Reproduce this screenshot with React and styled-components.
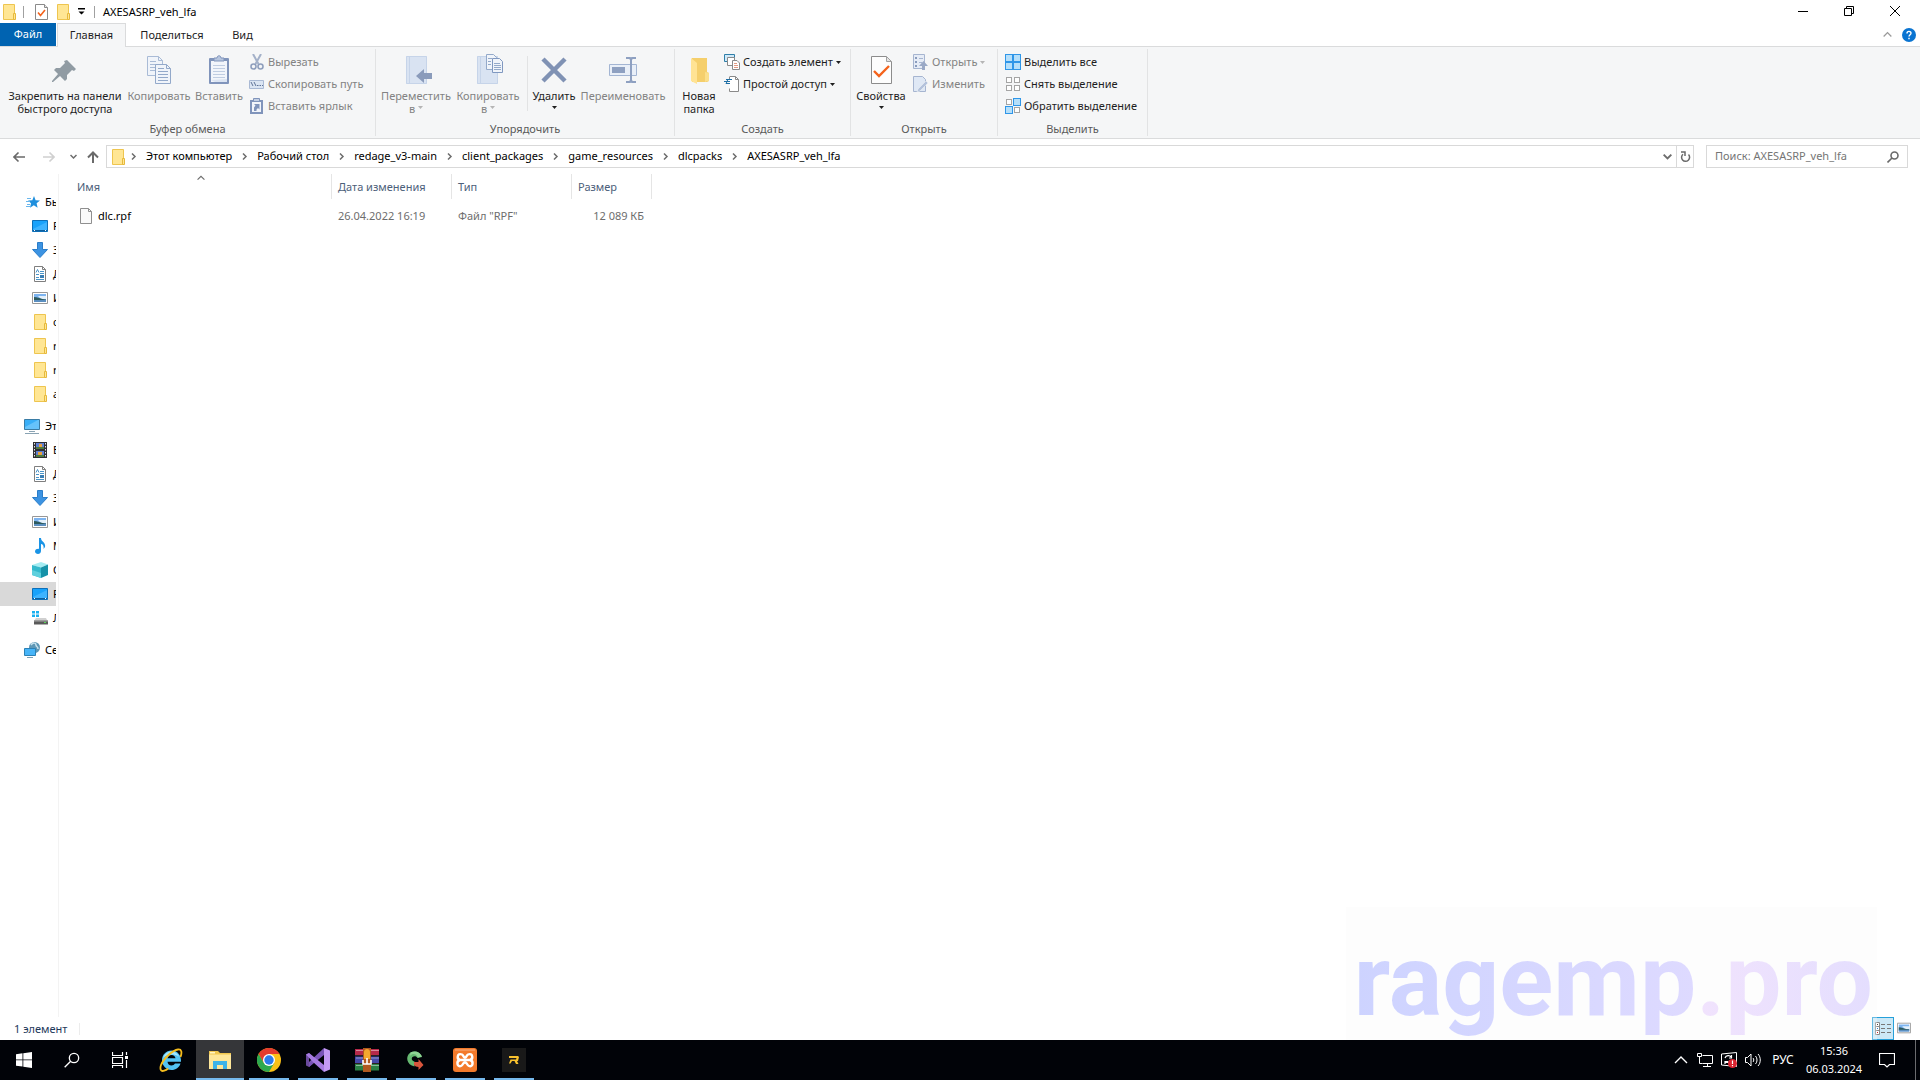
import React from 'react';
import styled, { createGlobalStyle } from 'styled-components';

const GlobalStyle = createGlobalStyle`
  *, *::before, *::after {
    box-sizing: border-box;
  }
  body {
    margin: 0;
    font-family: 'Noto Sans', 'Open Sans', sans-serif;
    font-size: 11px;
    line-height: 16px;
    color: #1e1e1e;
    background: #fff;
  }
  button, input {
    font: inherit;
    color: inherit;
    background: none;
    border: 0;
    padding: 0;
    margin: 0;
  }
  svg {
    display: block;
    flex: none;
  }
`;

const Desktop = styled.div`
  position: relative;
  display: flex;
  flex-direction: column;
  min-height: 100vh;
  overflow: hidden;
`;

/* ---------- title bar ---------- */

const TitleBar = styled.header`
  display: flex;
  align-items: stretch;
  height: 23px;
  padding: 0 2px 0 1px;
`;

const QuickTools = styled.div`
  display: flex;
  align-items: center;
  flex: 1;
`;

const QuickButton = styled.button`
  display: flex;
  justify-content: center;
  align-items: center;
  width: ${({ width }) => width}px;
  height: 23px;
`;

const Divider = styled.span`
  width: 1px;
  height: 12px;
  margin-left: ${({ space }) => space || 0}px;
  background: #a0a0a0;
`;

const WindowTitle = styled.h1`
  margin: 0 0 0 8px;
  font-size: 11px;
  font-weight: 400;
  color: #000;
`;

const CaptionButton = styled.button`
  display: flex;
  justify-content: center;
  align-items: center;
  width: 46px;
  height: 21px;
`;

/* ---------- tabs ---------- */

const TabBar = styled.nav`
  display: flex;
  height: 24px;
  border-bottom: 1px solid #dadbdc;
`;

const Tab = styled.button`
  width: ${({ width }) => width}px;
  height: 24px;
  padding-bottom: 2px;
  border: 1px solid transparent;
  border-bottom: 0;
  ${({ active }) => active && 'background: #f5f6f7; border-color: #dadbdc;'}
`;

const FileTab = styled.button`
  width: 56px;
  height: 23px;
  margin-right: 1px;
  padding-bottom: 1px;
  color: #fff;
  background: #0063b1;
`;

const TabTools = styled.div`
  display: flex;
  align-items: center;
  gap: 10px;
  margin-left: auto;
  padding-right: 4px;
`;

/* ---------- ribbon ---------- */

const Ribbon = styled.section`
  display: flex;
  padding: 2px 0;
  background: #f5f6f7;
  border-bottom: 1px solid #dadbdc;
`;

const Group = styled.div`
  display: flex;
  flex-direction: column;
  width: ${({ width }) => width}px;
  padding-top: 2px;
  border-right: 1px solid #e2e3e4;
`;

const GroupItems = styled.div`
  display: flex;
  height: 71px;
  padding-left: ${({ indent }) => indent}px;
`;

const GroupLabel = styled.div`
  line-height: 14px;
  text-align: center;
  color: #5a5a5a;
`;

const LargeButton = styled.button`
  display: flex;
  flex-direction: column;
  align-items: center;
  width: ${({ width }) => width}px;
  padding-top: 3px;
  line-height: 13px;
  white-space: nowrap;
  color: ${({ disabled }) => (disabled ? '#838383' : '#1e1e1e')};

  svg:first-child {
    margin-bottom: 3px;
  }
`;

const LabelLine = styled.span`
  display: flex;
  align-items: center;
  justify-content: center;
  gap: 3px;
  height: 13px;
`;

const SmallColumn = styled.div`
  display: flex;
  flex-direction: column;
  padding-left: ${({ indent }) => indent || 3}px;
`;

const SmallButton = styled.button`
  display: flex;
  align-items: center;
  gap: 3px;
  height: 22px;
  white-space: nowrap;
  color: ${({ disabled }) => (disabled ? '#838383' : '#1e1e1e')};
`;

const ItemDivider = styled.span`
  width: 1px;
  height: 55px;
  margin: 5px 2px 0 5px;
  background: #e2e3e4;
`;

/* ---------- address row ---------- */

const AddressRow = styled.div`
  display: flex;
  align-items: center;
  height: 35px;
  padding: 0 12px 0 7px;
`;

const NavButton = styled.button`
  display: flex;
  justify-content: center;
  align-items: center;
  width: ${({ width }) => width}px;
  height: 22px;
`;

const AddressBox = styled.div`
  display: flex;
  align-items: center;
  flex: 1;
  height: 23px;
  margin-right: 12px;
  border: 1px solid #d9d9d9;
`;

const AddressIcon = styled.span`
  display: flex;
  width: 14px;
  padding-left: 3px;
`;

const Crumbs = styled.ol`
  display: flex;
  align-items: center;
  flex: 1;
  margin: 0;
  padding: 0 0 2px;
  list-style: none;
`;

const Crumb = styled.li`
  display: flex;
  align-items: center;

  a {
    color: #000;
    text-decoration: none;
  }
`;

const CrumbArrow = styled.span`
  display: flex;
  justify-content: center;
  width: 25px;
  padding-top: 2px;
`;

const BoxButton = styled.button`
  display: flex;
  justify-content: center;
  align-items: center;
  width: 17px;
  height: 21px;
  ${({ framed }) => framed && 'border-left: 1px solid #d9d9d9;'}
`;

const SearchBox = styled.label`
  display: flex;
  align-items: center;
  width: 202px;
  height: 23px;
  padding: 0 8px;
  border: 1px solid #d9d9d9;

  input {
    flex: 1;
    min-width: 0;
    padding-bottom: 2px;
    outline: 0;
  }
  input::placeholder {
    color: #757575;
    opacity: 1;
  }
`;

/* ---------- body ---------- */

const Body = styled.main`
  display: flex;
  flex: 1;
`;

const Sidebar = styled.aside`
  width: 59px;
  padding: 16px 2px 0 0;
  border-right: 1px solid #f3f3f3;
`;

const TreeList = styled.ul`
  margin: 0 0 8px;
  padding: 0;
  list-style: none;
`;

const TreeItem = styled.li`
  a {
    display: flex;
    align-items: center;
    gap: 5px;
    height: 24px;
    padding-left: ${({ nested }) => (nested ? 32 : 24)}px;
    overflow: hidden;
    white-space: nowrap;
    text-decoration: none;
    color: #000;
    background: ${({ selected }) => (selected ? '#d9d9d9' : 'transparent')};
  }
`;

const FileArea = styled.section`
  flex: 1;
  padding-left: 12px;
`;

const FileTable = styled.table`
  width: 581px;
  table-layout: fixed;
  border-collapse: separate;
  border-spacing: 0;

  th {
    position: relative;
    height: 25px;
    padding: 1px 6px 0;
    font-weight: 400;
    text-align: left;
    color: #4c607a;
    border-right: 1px solid #e5e5e5;
  }
  td {
    height: 34px;
    padding: 0 8px 0 6px;
    color: #6d6d6d;
  }
`;

const SortMark = styled.span`
  position: absolute;
  top: 0;
  left: 50%;
  margin-left: -4px;
`;

const FileName = styled.span`
  display: flex;
  align-items: center;
  gap: 5px;
  padding-left: 2px;
  color: #000;
`;

const SizeCell = styled.td`
  text-align: right;
`;

/* ---------- status bar ---------- */

const StatusBar = styled.footer`
  display: flex;
  align-items: center;
  height: 23px;
  padding: 0 6px 0 14px;
  color: #1e395b;
`;

const StatusDivider = styled.span`
  width: 1px;
  height: 12px;
  margin-left: 12px;
  background: #ececec;
`;

const ViewButtons = styled.div`
  display: flex;
  margin-left: auto;
`;

const ViewButton = styled.button`
  display: flex;
  justify-content: center;
  align-items: center;
  width: ${({ active }) => (active ? 22 : 20)}px;
  height: 23px;
  padding-bottom: 2px;
  ${({ active }) => active && 'padding: 0; background: #cce8f6; border: 1px solid #26a0da;'}
`;

const Watermark = styled.div`
  position: absolute;
  right: 43px;
  bottom: 40px;
  height: 133px;
  padding: 24px 4px 0 8px;
  font-family: Roboto, sans-serif;
  font-size: 100px;
  font-weight: 700;
  line-height: 100px;
  white-space: nowrap;
  background: rgba(248, 248, 250, 0.3);
  pointer-events: none;

  span {
    color: transparent;
    background: linear-gradient(90deg, #cdd3ff, #dedaff);
    background-clip: text;
    -webkit-background-clip: text;
  }
  span + span {
    background: linear-gradient(90deg, #f1e3fd, #e4defe);
    background-clip: text;
    -webkit-background-clip: text;
  }
`;

/* ---------- taskbar ---------- */

const Taskbar = styled.nav`
  display: flex;
  height: 40px;
  background: #010308;
  color: #fff;
`;

const TaskButtons = styled.div`
  display: flex;
`;

const AppButtons = styled(TaskButtons)`
  gap: 1px;
  margin-left: 3px;
`;

const TaskButton = styled.button`
  display: flex;
  justify-content: center;
  align-items: center;
  width: 48px;
  height: 40px;
  background-color: ${({ active }) => (active ? '#353639' : 'transparent')};
  background-image: ${({ running }) =>
    running ? 'linear-gradient(#76b9ed, #76b9ed)' : 'none'};
  background-repeat: no-repeat;
  background-position: 50% 100%;
  background-size: ${({ active }) => (active ? 48 : 40)}px 2px;
`;

const Tray = styled.div`
  display: flex;
  align-items: center;
  margin-left: auto;
`;

const TrayButton = styled.button`
  display: flex;
  justify-content: center;
  align-items: center;
  width: ${({ width }) => width || 24}px;
  height: 40px;
  font-size: ${({ small }) => (small ? 11 : 12)}px;
`;

const Clock = styled.time`
  display: flex;
  flex-direction: column;
  align-items: center;
  line-height: 18px;
`;

const ShowDesktop = styled.button`
  width: 5px;
  height: 40px;
  margin-left: 8px;
  border-left: 1px solid #6b6c6f;
`;

/* ---------- icons ---------- */

const Svg = ({ w = 16, h = w, box, children }) => (
  <svg width={w} height={h} viewBox={box || `0 0 ${w} ${h}`} fill="none" aria-hidden="true">
    {children}
  </svg>
);

const Caret = ({ color = '#1e1e1e' }) => (
  <Svg w={5} h={3}>
    <path d="M0 0h5L2.5 3z" fill={color} />
  </Svg>
);

const Chevron = ({ dir = 'right', color = '#6d6d6d', size = 7, stroke = 1.5 }) => {
  const paths = {
    right: 'M2 0.5L5 3.5 2 6.5',
    down: 'M0.5 2L3.5 5 6.5 2',
    up: 'M0.5 5L3.5 2 6.5 5',
  };
  return (
    <Svg w={size} box="0 0 7 7">
      <path d={paths[dir]} stroke={color} strokeWidth={stroke} />
    </Svg>
  );
};

const FolderIcon = () => (
  <Svg>
    <path d="M2.5 0.5h11v15h-11z" fill="#ffe694" stroke="#eec54f" />
    <path d="M12.5 9.5h2v6h-2z" fill="#ffe694" stroke="#e6b93c" />
  </Svg>
);

const CheckDocIcon = () => (
  <Svg>
    <path d="M2.5 0.5h9l3 3v12h-12z" fill="#fff" stroke="#8a8a8a" />
    <path d="M11.5 0.5v3h3" stroke="#8a8a8a" fill="#e8e8e8" />
    <path d="M5 8.5l2.5 3L12 6" stroke="#f4621b" strokeWidth="1.6" />
  </Svg>
);

const PropertiesIcon = () => (
  <Svg w={32}>
    <path d="M6.500 2.500h15l5 5v22h-20z" fill="#fdfdfd" stroke="#8c8c8c" />
    <path d="M21.5 2.5v5h5z" fill="#e4e4e4" stroke="#a0a0a0" />
    <path d="M9 17l5 5 10-10" stroke="#f4621b" strokeWidth="2.4" />
  </Svg>
);

const CustomizeIcon = () => (
  <Svg w={7}>
    <path d="M0 0h7v1.5H0zM0.5 3.5h6L3.5 6.5z" fill="#000" />
  </Svg>
);

const MinimizeIcon = () => (
  <Svg w={10}>
    <path d="M0 5.5h10" stroke="#000" />
  </Svg>
);

const RestoreIcon = () => (
  <Svg w={10}>
    <path d="M0.5 2.5h7v7h-7zM2.5 2.5v-2h7v7h-2" stroke="#000" />
  </Svg>
);

const CloseIcon = () => (
  <Svg w={10}>
    <path d="M0 0l10 10M10 0L0 10" stroke="#000" />
  </Svg>
);

const HelpIcon = () => (
  <Svg w={14}>
    <circle cx="7" cy="7" r="7" fill="#0a74d1" />
    <path d="M5 5.4c0-2.600 4-2.600 4-.2 0 1.500-2 1.500-2 3.300M7 9.800v1.500" stroke="#fff" strokeWidth="1.4" />
  </Svg>
);

const PinIcon = () => (
  <Svg w={32}>
    <path
      d="M18 6l9 9-2 2-2-1-5 5 0 4-2 2-5-5-7 6-1 0 0-1 6-7-4-4 2-2 4 0 5-5-1-2z"
      fill="#909ba3"
    />
  </Svg>
);

const CopyIcon = () => (
  <Svg w={32}>
    <path d="M4.5 2.5h11l4 4v15h-15z" fill="#f0f4fa" stroke="#a9bbd6" />
    <path d="M15.5 2.5v4h4M7 7.5h6M7 10.5h6M7 13.5h5M7 16.5h5" stroke="#a9bbd6" />
    <path d="M12.5 10.5h11l4 4v15h-15z" fill="#f0f4fa" stroke="#93a9ca" />
    <path d="M23.5 10.5v4h4M15 14.5h6M15 17.5h10M15 20.5h10M15 23.5h10M15 26.5h10" stroke="#93a9ca" />
  </Svg>
);

const PasteIcon = () => (
  <Svg w={32}>
    <rect x="6" y="4" width="20" height="26" rx="1" fill="#8094bb" />
    <path d="M8 7h16v21H8z" fill="#f2f5fb" />
    <path d="M8 26l4 2h12v-3z" fill="#dbe4f2" />
    <path d="M11 7V4h3c0-3 4-3 4 0h3v3z" fill="#b6c5de" stroke="#8094bb" />
    <path d="M10 11.5h12M10 14.5h12M10 17.5h12M10 20.5h12M10 23.5h12" stroke="#c0cde2" />
  </Svg>
);

const CutIcon = () => (
  <Svg>
    <path d="M4 0l5.5 10M12 0L6.5 10" stroke="#a4b1c9" strokeWidth="2" />
    <circle cx="4.5" cy="12.5" r="2.5" stroke="#8f9fbd" strokeWidth="1.6" />
    <circle cx="11.5" cy="12.5" r="2.5" stroke="#8f9fbd" strokeWidth="1.6" />
  </Svg>
);

const CopyPathIcon = () => (
  <Svg>
    <path d="M0.5 4.5h14v8h-14z" fill="#dbe5f3" stroke="#a9b9d4" />
    <path d="M2 6l2 4M5 6l2 4M8 9.5h1.5M10.5 9.5H12M13 9.5h1" stroke="#5f7397" />
  </Svg>
);

const ShortcutIcon = () => (
  <Svg>
    <path d="M1 2h13v14H1z" fill="#8094bb" />
    <path d="M3 4h9v10H3z" fill="#f2f5fb" />
    <path d="M4.5 0.5h6v3h-6z" fill="#c3cfe3" stroke="#8094bb" />
    <path d="M5 13v-3.500l1.500-2L5 6h5.500v5.500L9 10l-1.500 1.500V13z" fill="#8094bb" />
  </Svg>
);

const MoveToIcon = () => (
  <Svg w={32}>
    <path d="M6 2h21v28H6z" fill="#d9e3f2" />
    <path d="M6.5 2.5h20v27h-20zM9.5 2v27" stroke="#c6d4e9" />
    <path d="M16 22l8-7v4h8v6h-8v4z" fill="#8a9bbb" />
  </Svg>
);

const CopyToIcon = () => (
  <Svg w={32}>
    <path d="M5 2h21v28H5z" fill="#d9e3f2" />
    <path d="M5.5 2.5h20v27h-20zM8.5 2v27" stroke="#c6d4e9" />
    <path d="M14.5 0.5h7l3 3v12h-10z" fill="#f0f4fa" stroke="#93a9ca" />
    <path d="M20.5 4.5h7l3 3v11h-10z" fill="#f0f4fa" stroke="#8098c0" />
    <path d="M16 4.5h4M16 7.5h3M16 10.5h3M22 9.5h6M22 11.5h7M22 13.5h7M22 15.5h7" stroke="#93a9ca" />
  </Svg>
);

const DeleteIcon = () => (
  <Svg w={32}>
    <path d="M5 5l22 22M27 5L5 27" stroke="#8092b4" strokeWidth="4.5" />
  </Svg>
);

const RenameIcon = () => (
  <Svg w={32}>
    <path d="M2.5 10.5h27v11h-27z" fill="#e9eff8" stroke="#a3b5d3" />
    <path d="M5 13h13v6H5z" fill="#8ea0c1" />
    <path d="M19 4h4l1 2 1-2h4M24 5v22M19 28h4l1-2 1 2h4" stroke="#8ea0c1" strokeWidth="2" />
  </Svg>
);

const NewFolderIcon = () => (
  <Svg w={32}>
    <path d="M9 4h15v14l2 1v8l-2 1H9z" fill="#f5cf6c" />
    <path d="M22 18l4 1v8h-2l-2 1z" fill="#fbdf8b" />
    <path d="M8 4l6 5v21l-6-3z" fill="#ffe394" />
  </Svg>
);

const NewItemIcon = () => (
  <Svg>
    <path d="M0.5 0.5h10v7h-10z" fill="#cfe9f9" stroke="#2e7ea8" />
    <path d="M3.5 3.5h7v8h-7z" fill="#fff" stroke="#8a8a8a" />
    <path d="M8.5 6.5h4.5l2.5 2.5v6.5h-7z" fill="#fff" stroke="#8a8a8a" />
    <path d="M10 9.5h3M10 11.5h4M10 13.5h4" stroke="#e39a82" />
  </Svg>
);

const EasyAccessIcon = () => (
  <Svg>
    <path d="M5.5 0.5h6l3 3v12h-9v-3M5.5 1v2" fill="#fff" stroke="#8a8a8a" />
    <path d="M11.5 0.5v3h3" stroke="#8a8a8a" />
    <path d="M2 3.5h6M0 5.5h6M2 7.5h4M4 3l-2 5" stroke="#1d6ea5" />
  </Svg>
);

const OpenIcon = () => (
  <Svg>
    <path d="M0.5 0.5h11v14h-11z" fill="#e6ecf6" stroke="#a6b5d0" />
    <path d="M2 3h2v2H2zM2 7h2v2H2zM2 11h2v2H2z" fill="#8a9cbd" />
    <path d="M6 4.5h4M6 8.5h3" stroke="#a6b5d0" />
    <path d="M10.500 7l4.500 5h-3v4H9v-4H6z" fill="#9aa9c6" />
  </Svg>
);

const EditIcon = () => (
  <Svg>
    <path d="M0.5 0.5h9l3 3v12h-12z" fill="#dfe8f5" stroke="#a6b5d0" />
    <path d="M13 5l2 2-8 8-3 1 1-3z" fill="#b3c2dc" stroke="#f5f6f7" strokeWidth="0.5" />
  </Svg>
);

const tile = (x, y, on) => (
  <rect
    key={`${x}-${y}`}
    x={x + (on ? 0.5 : 1.5)}
    y={y + (on ? 0.5 : 1.5)}
    width={on ? 7 : 5}
    height={on ? 7 : 5}
    fill={on ? '#b5dffa' : '#fff'}
    stroke={on ? '#2f96e8' : '#a5a5a5'}
  />
);

const TilesIcon = ({ on }) => (
  <Svg>
    {tile(0, 0, on[0])}
    {tile(8, 0, on[1])}
    {tile(0, 8, on[2])}
    {tile(8, 8, on[3])}
  </Svg>
);

const ArrowIcon = ({ color = '#6a6a6a', forward }) => (
  <Svg w={12}>
    <path
      d={forward ? 'M0 6h11M6.5 1.5L11 6l-4.5 4.5' : 'M1 6h11M5.5 1.5L1 6l4.5 4.5'}
      stroke={color}
      strokeWidth="1.6"
    />
  </Svg>
);

const UpIcon = () => (
  <Svg w={12}>
    <path d="M6 12V1.5M1 6.5l5-5 5 5" stroke="#6a6a6a" strokeWidth="2" />
  </Svg>
);

const RefreshIcon = () => (
  <Svg w={11}>
    <path d="M3 3.2A4 4 0 1 0 8.500 3.500M1 1h4v4" stroke="#6a6a6a" strokeWidth="1.5" />
  </Svg>
);

const LoupeIcon = ({ size = 12, color = '#6a6a6a', stroke = 1.6 }) => (
  <Svg w={size} box="0 0 12 12">
    <circle cx="7.5" cy="4.5" r="3.5" stroke={color} strokeWidth={stroke} />
    <path d="M5 7L0.5 11.5" stroke={color} strokeWidth={stroke} />
  </Svg>
);

const StarIcon = () => (
  <Svg>
    <path d="M10 2l1.6 4.2 4.4.3-3.4 2.8 1 4.5-3.800-2.500L6 13.800l1-4.500L4 6.500l4.300-.3z" fill="#1f8fdd" />
    <path d="M3 4.5h4M2 7.5h4M3 10.5h3M2 12.5h4" stroke="#69b6ec" />
  </Svg>
);

const DesktopIcon = () => (
  <Svg>
    <path d="M0.5 2.5h15v11h-15z" fill="#18a2fb" stroke="#0d6fb8" />
    <path d="M1 11l14-7v9H1z" fill="#3db3ff" />
    <path d="M1 12.5h14" stroke="#0d5f9e" />
    <path d="M2 12.5h1M13 12.5h1" stroke="#fff" />
  </Svg>
);

const DownloadIcon = () => (
  <Svg>
    <path d="M5.5 0.5h5v7h5L8 15.5 0.5 7.5h5z" fill="#3c93e2" stroke="#2b7dc9" />
  </Svg>
);

const DocumentIcon = () => (
  <Svg>
    <path d="M2.5 0.5h8l3 3v12h-11z" fill="#fff" stroke="#7f7f7f" />
    <path d="M10.5 0.5v3h3" stroke="#7f7f7f" />
    <path d="M4 6.5l1.5-3 1.5 3M8 5.5h4M4 8.5h3M8 7.5h4M4 11.5h3M4 13.5h8" stroke="#4a94c8" />
    <path d="M8 9h4v3H8z" fill="#3b7fb5" />
  </Svg>
);

const PictureIcon = ({ size = 16 }) => (
  <Svg w={size} box="0 0 16 16">
    <path d="M0.5 2.5h15v11h-15z" fill="#fff" stroke="#979797" />
    <path d="M2 4h12v8H2z" fill="#7db4f0" />
    <path d="M6 6h8v3H9z" fill="#e3f0fb" />
    <path d="M2 7c3 0 7 2 12 2.500v1H2z" fill="#2d5a5e" />
    <path d="M2 10h12v2H2z" fill="#5b8fc0" />
  </Svg>
);

const ComputerIcon = () => (
  <Svg>
    <path d="M0.5 1.5h15v10h-15z" fill="#38aef7" stroke="#3a7ca5" />
    <path d="M1 9l13-7h1v9H1z" fill="#66c3fb" />
    <path d="M5 13.5h6M1 15.5h14" stroke="#8aa3b3" />
  </Svg>
);

const VideoIcon = () => (
  <Svg>
    <path d="M1 0h14v16H1z" fill="#2f2f33" />
    <path d="M4 1h8v6H4zM4 9h8v6H4z" fill="#5f7fd0" />
    <path d="M4 5h8v2H4zM4 13h8v2H4z" fill="#4d7a3f" />
    <path d="M7 2h3v3H7zM6 10h4v3H6z" fill="#e8a13a" />
    <path d="M2.5 1v14M13.5 1v14" stroke="#e6e6e6" strokeDasharray="1.5 1.5" />
  </Svg>
);

const MusicIcon = () => (
  <Svg>
    <path d="M7 0h2c0 4 5 4 4 9-.5 1-1 1-1.5 2C12 8 11 6 9 6v7c0 4-6 3.500-6 .5C3 11 6 10.500 7 11z" fill="#1a94e6" />
  </Svg>
);

const CubeIcon = () => (
  <Svg>
    <path d="M0 3l9-3 7 2.5-7 3z" fill="#a4ecf2" />
    <path d="M0 3l9 2.5V16L0 13z" fill="#33b9cc" />
    <path d="M9 5.5l7-3V13l-7 3z" fill="#1592a8" />
    <path d="M0 8l9 3v5l-9-3z" fill="#5fd0dd" />
  </Svg>
);

const DiskIcon = () => (
  <Svg>
    <path d="M0 1h3v2.5H0zM4 1h3v2.5H4zM0 4.5h3V7H0zM4 4.5h3V7H4z" fill="#1ab0f0" />
    <path d="M4 8h10l1.5 3H2z" fill="#d0d0d0" />
    <path d="M2 10.500h14v4h-14z" fill="#5a5a5a" />
    <path d="M2 10.500h14v1H2z" fill="#a5a5a5" />
    <path d="M12 12.500h2" stroke="#57d657" />
  </Svg>
);

const NetworkIcon = () => (
  <Svg>
    <circle cx="10.5" cy="5.5" r="5.5" fill="#5e97b5" />
    <path d="M7 3c2-3 5-2 5 0s2 1 2 4" stroke="#c8e2ee" strokeWidth="1.5" />
    <path d="M0.5 6.5h11v7h-11z" fill="#46b4f8" stroke="#2c81b5" />
    <path d="M3 15.5h6" stroke="#7ba0b5" />
  </Svg>
);

const FileIcon = () => (
  <Svg w={14} h={16}>
    <path d="M1.5 0.5h8l3 3v12h-11z" fill="#fafafa" stroke="#8f8f8f" />
    <path d="M9.5 0.5v3h3" stroke="#8f8f8f" />
  </Svg>
);

const DetailsIcon = () => (
  <Svg w={16} h={13}>
    <path d="M0.5 0.5h4v12h-4zM0.5 4.5h4M0.5 8.5h4" fill="#fff" stroke="#8a8a8a" />
    <path d="M2 2.5h1" stroke="#444" />
    <path d="M2 6.5h1" stroke="#2f7fd0" />
    <path d="M2 10.5h1" stroke="#d02020" />
    <path d="M6 2.5h4M12 2.5h4M6 6.5h4M12 6.5h4M6 10.5h4M12 10.5h4" stroke="#777" />
  </Svg>
);

const StartIcon = () => (
  <Svg>
    <path d="M0 2.2L6.5 1.3v6.2H0zM7.3 1.2L16 0v7.5H7.3zM0 8.3h6.5v6.3L0 13.7zM7.3 8.3H16V16l-8.7-1.2z" fill="#fff" />
  </Svg>
);

const TaskViewIcon = () => (
  <Svg>
    <path
      d="M0.5 0v3.500h10V0M0.500 5.500h10v6h-10zM0.500 16v-2.500h10V16M14.500 0v3M14.500 8v8"
      stroke="#fff"
      strokeWidth="1.2"
    />
    <path d="M13 4h3v3h-3z" fill="#fff" />
  </Svg>
);

const ExplorerIcon = () => (
  <Svg w={24}>
    <path d="M1 3h9l2 2h11v16H1z" fill="#f0c64e" />
    <path d="M2 4h5v1.5H2z" fill="#fff4c4" />
    <path d="M1 6.5h22V21H1z" fill="#fde699" />
    <path d="M5 13h14v8h-4v-4H9v4H5z" fill="#3db3e8" />
  </Svg>
);

const IeIcon = () => (
  <Svg w={24}>
    <path
      d="M12.5 2.500c-5.500 0-9.500 4.500-9.500 9.800 0 5.200 4 9.700 9.500 9.700 4.300 0 7.800-2.500 9-6.500h-5.500c-.8 1.300-2 2-3.500 2-2.300 0-3.800-1.500-4-3.700h13.500c.5-6.500-3.700-11.300-9.500-11.300zm-4 7.800c.4-2 2-3.300 4.100-3.300s3.600 1.300 3.900 3.300z"
      fill="#53c3f3"
    />
    <path d="M12.5 3.500c-4 0-7.500 2.500-8.300 6.500 3.500-3.500 9-5 16-1.500-1.500-3-4.200-5-7.700-5z" fill="#a7e6fb" />
    <path
      d="M21.500 9c1.800-5 1-8-2.500-7.500-5 .7-14 8-17 15.500-1.300 4-.3 7 3.200 5.700 1.500-.5 3-1.400 4-2.200"
      stroke="#f5bd1e"
      strokeWidth="1.8"
    />
  </Svg>
);

const ChromeIcon = () => (
  <Svg w={24}>
    <circle cx="12" cy="12" r="12" fill="#fbc116" />
    <path d="M1.6 6A12 12 0 0 1 22.4 6H12L6.8 15z" fill="#e33b2e" />
    <path d="M1.6 6A12 12 0 0 0 12 24l5.2-9H6.8z" fill="#2da94f" />
    <circle cx="12" cy="12" r="6" fill="#fff" />
    <circle cx="12" cy="12" r="4.7" fill="#2b7bea" />
  </Svg>
);

const VisualStudioIcon = () => (
  <Svg w={24}>
    <path d="M0 6.5L3 5l4 3.5v7L3 19l-3-1.500z" fill="#6a4a9e" />
    <path d="M3 9l3 3-3 3z" fill="#010308" />
    <path d="M3 19l15-12V0L3 14z" fill="#7a55b8" />
    <path d="M3 5l15 12v7L7 14 0 6.500z" fill="#a67be0" />
    <path d="M18 0l6 2.5v19L18 24z" fill="#c39af3" />
  </Svg>
);

const WinrarIcon = () => (
  <Svg w={24}>
    <path d="M0 1h24v6.5H0z" fill="#b5294a" />
    <path d="M0 8.5h24v6.5H0z" fill="#4549a8" />
    <path d="M0 16h24v6.5H0z" fill="#2a8145" />
    <path d="M1 2.5h23M1 10h23M1 17.5h23" stroke="#fff" strokeOpacity="0.45" />
    <path d="M0 7.5h24M0 15.5h24" stroke="#2b2020" />
    <path d="M8 0h8v24H8z" fill="#b1591f" />
    <path d="M9 4c0-4 6-4 6 0v7H9z" fill="#f3a72f" />
    <path d="M8 12v4h8v-4M12 10v6" stroke="#fff" strokeWidth="1.6" />
  </Svg>
);

const RecoverIcon = () => (
  <Svg w={24}>
    <path d="M18 9c-1.500-5-7-7-11.500-4.500C1 8 2.500 17 10.500 18.500v-5C8 13 7 10.500 8.500 9c1.500-1.500 4-1 5 1z" fill="#66b871" />
    <path d="M6.500 4.500C11 2 16 4 18 8.500l-4 1C12 5.500 8.500 5 6 8z" fill="#8fd494" />
    <path d="M10 14h4.500v-3l5 6-5 5v-3c-2 0-3.500-1-4.500-2z" fill="#d8563d" />
  </Svg>
);

const XamppIcon = () => (
  <Svg w={24}>
    <rect width="24" height="24" rx="3" fill="#f37a2b" />
    <path d="M2 2h20" stroke="#f8b084" />
    <path
      d="M9 6.5C4 4.500 3.500 11 7 12c-4 1-3 7.500 1 6 2.500-1 1.500-3.500 4-3.500s1.500 2.500 4 3.500c4 1.500 5-5 1-6 3.500-1 3-7.500-2-5.500-2 1-1 3-3 3s-1-2-3-3zM7 12h10"
      stroke="#fff"
      strokeWidth="2.4"
    />
  </Svg>
);

const RageIcon = () => (
  <Svg w={24}>
    <path d="M0 0h24v24H0z" fill="#191919" />
    <path d="M7 8h9l1 1-1 4h-1l1.500 3H14l-1.500-3H10l-1.500 2.500H7l1.500-4h5.500l.5-1.500H7z" fill="#f9c22e" />
  </Svg>
);

const TrayNetworkIcon = () => (
  <Svg>
    <path d="M5.5 3.5h10v8h-10M10.5 11.5v3M6 14.5h8M0.5 1.5h4v3h-4zM2.5 4.5v7h3" stroke="#fff" />
  </Svg>
);

const TrayUpdateIcon = () => (
  <Svg>
    <path d="M0.5 2L15.5 0.5v14L0.5 13z" stroke="#fff" />
    <path d="M4 6c1-3 5-3 6-1M9.5 8c-1 3-4 3-5.5 1.5M10.5 3v3H8M4 12V9.5h3" stroke="#fff" strokeWidth="1.2" />
    <circle cx="11.5" cy="11.5" r="4.5" fill="#dc2430" />
    <path d="M11.5 8.5V12M11.5 13v1.3" stroke="#fff" strokeWidth="1.2" />
  </Svg>
);

const VolumeIcon = () => (
  <Svg>
    <path d="M0.5 5.5h2l3.5-3.5v12L2.5 10.5h-2zM8 6c1 1 1 3 0 4M10.5 4c2 2 2 6 0 8M13 2c3 3 3 9 0 12" stroke="#fff" />
  </Svg>
);

const ActionCenterIcon = () => (
  <Svg>
    <path d="M0.5 1.5h15v11h-5L8 15l-2.5-2.5h-5z" stroke="#fff" strokeWidth="1.2" />
  </Svg>
);

/* ---------- data ---------- */

const tabs = [
  { title: 'Главная', width: 69, active: true },
  { title: 'Поделиться', width: 92 },
  { title: 'Вид', width: 49 },
];

const crumbs = [
  'Этот компьютер',
  'Рабочий стол',
  'redage_v3-main',
  'client_packages',
  'game_resources',
  'dlcpacks',
  'AXESASRP_veh_lfa',
];

const tree = [
  [
    { title: 'Быстрый доступ', icon: <StarIcon /> },
    { title: 'Рабочий стол', icon: <DesktopIcon />, nested: true },
    { title: 'Загрузки', icon: <DownloadIcon />, nested: true },
    { title: 'Документы', icon: <DocumentIcon />, nested: true },
    { title: 'Изображения', icon: <PictureIcon />, nested: true },
    { title: 'client', icon: <FolderIcon />, nested: true },
    { title: 'redage', icon: <FolderIcon />, nested: true },
    { title: 'ragemp', icon: <FolderIcon />, nested: true },
    { title: 'assets', icon: <FolderIcon />, nested: true },
  ],
  [
    { title: 'Этот компьютер', icon: <ComputerIcon /> },
    { title: 'Видео', icon: <VideoIcon />, nested: true },
    { title: 'Документы', icon: <DocumentIcon />, nested: true },
    { title: 'Загрузки', icon: <DownloadIcon />, nested: true },
    { title: 'Изображения', icon: <PictureIcon />, nested: true },
    { title: 'Музыка', icon: <MusicIcon />, nested: true },
    { title: 'Объемные объекты', icon: <CubeIcon />, nested: true },
    { title: 'Рабочий стол', icon: <DesktopIcon />, nested: true, selected: true },
    { title: 'Локальный диск', icon: <DiskIcon />, nested: true },
  ],
  [{ title: 'Сеть', icon: <NetworkIcon /> }],
];

const apps = [
  { title: 'Internet Explorer', icon: <IeIcon /> },
  { title: 'Проводник', icon: <ExplorerIcon />, active: true, running: true },
  { title: 'Google Chrome', icon: <ChromeIcon />, running: true },
  { title: 'Visual Studio', icon: <VisualStudioIcon />, running: true },
  { title: 'WinRAR', icon: <WinrarIcon />, running: true },
  { title: 'Recovery', icon: <RecoverIcon />, running: true },
  { title: 'XAMPP', icon: <XamppIcon />, running: true },
  { title: 'RAGE', icon: <RageIcon />, running: true },
];

/* ---------- parts ---------- */

const Large = ({ icon, width, lines, caret, disabled }) => (
  <LargeButton width={width} disabled={disabled}>
    {icon}
    {lines.map((line, i) => (
      <LabelLine key={line || 'caret'}>
        {line}
        {caret && i === lines.length - 1 && <Caret color={disabled ? '#b5b5b5' : undefined} />}
      </LabelLine>
    ))}
  </LargeButton>
);

const Small = ({ icon, children, caret, disabled }) => (
  <SmallButton disabled={disabled}>
    {icon}
    {children}
    {caret && <Caret color={disabled ? '#b5b5b5' : undefined} />}
  </SmallButton>
);

const RibbonPanel = () => (
  <Ribbon>
    <Group width={376}>
      <GroupItems indent={5}>
        <Large icon={<PinIcon />} width={120} lines={['Закрепить на панели', 'быстрого доступа']} />
        <Large icon={<CopyIcon />} width={68} lines={['Копировать']} disabled />
        <Large icon={<PasteIcon />} width={52} lines={['Вставить']} disabled />
        <SmallColumn indent={4}>
          <Small icon={<CutIcon />} disabled>Вырезать</Small>
          <Small icon={<CopyPathIcon />} disabled>Скопировать путь</Small>
          <Small icon={<ShortcutIcon />} disabled>Вставить ярлык</Small>
        </SmallColumn>
      </GroupItems>
      <GroupLabel>Буфер обмена</GroupLabel>
    </Group>
    <Group width={299}>
      <GroupItems indent={2}>
        <Large icon={<MoveToIcon />} width={76} lines={['Переместить', 'в']} caret disabled />
        <Large icon={<CopyToIcon />} width={68} lines={['Копировать', 'в']} caret disabled />
        <ItemDivider />
        <Large icon={<DeleteIcon />} width={48} lines={['Удалить', '']} caret />
        <Large icon={<RenameIcon />} width={90} lines={['Переименовать']} disabled />
      </GroupItems>
      <GroupLabel>Упорядочить</GroupLabel>
    </Group>
    <Group width={176}>
      <GroupItems indent={4}>
        <Large icon={<NewFolderIcon />} width={40} lines={['Новая', 'папка']} />
        <SmallColumn indent={5}>
          <Small icon={<NewItemIcon />} caret>Создать элемент</Small>
          <Small icon={<EasyAccessIcon />} caret>Простой доступ</Small>
        </SmallColumn>
      </GroupItems>
      <GroupLabel>Создать</GroupLabel>
    </Group>
    <Group width={147}>
      <GroupItems indent={2}>
        <Large icon={<PropertiesIcon />} width={56} lines={['Свойства', '']} caret />
        <SmallColumn indent={4}>
          <Small icon={<OpenIcon />} caret disabled>Открыть</Small>
          <Small icon={<EditIcon />} disabled>Изменить</Small>
        </SmallColumn>
      </GroupItems>
      <GroupLabel>Открыть</GroupLabel>
    </Group>
    <Group width={150}>
      <GroupItems indent={4}>
        <SmallColumn>
          <Small icon={<TilesIcon on={[1, 1, 1, 1]} />}>Выделить все</Small>
          <Small icon={<TilesIcon on={[0, 0, 0, 0]} />}>Снять выделение</Small>
          <Small icon={<TilesIcon on={[0, 1, 1, 0]} />}>Обратить выделение</Small>
        </SmallColumn>
      </GroupItems>
      <GroupLabel>Выделить</GroupLabel>
    </Group>
  </Ribbon>
);

const App = () => (
  <>
    <GlobalStyle />
    <Desktop>
      <TitleBar>
        <QuickTools>
          <QuickButton width={16} aria-label="Меню окна"><FolderIcon /></QuickButton>
          <Divider space={6} />
          <QuickButton width={34} aria-label="Свойства"><CheckDocIcon /></QuickButton>
          <QuickButton width={10} aria-label="Новая папка"><FolderIcon /></QuickButton>
          <QuickButton width={26} aria-label="Настройка панели"><CustomizeIcon /></QuickButton>
          <Divider />
          <WindowTitle>AXESASRP_veh_lfa</WindowTitle>
        </QuickTools>
        <CaptionButton aria-label="Свернуть"><MinimizeIcon /></CaptionButton>
        <CaptionButton aria-label="Восстановить"><RestoreIcon /></CaptionButton>
        <CaptionButton aria-label="Закрыть"><CloseIcon /></CaptionButton>
      </TitleBar>

      <TabBar>
        <FileTab>Файл</FileTab>
        {tabs.map(({ title, width, active }) => (
          <Tab key={title} width={width} active={active ? 1 : undefined}>{title}</Tab>
        ))}
        <TabTools>
          <button aria-label="Свернуть ленту"><Chevron dir="up" size={9} color="#9a9a9a" stroke={1} /></button>
          <button aria-label="Справка"><HelpIcon /></button>
        </TabTools>
      </TabBar>

      <RibbonPanel />

      <AddressRow>
        <NavButton width={24} aria-label="Назад"><ArrowIcon /></NavButton>
        <NavButton width={36} aria-label="Вперед"><ArrowIcon forward color="#d0d0d0" /></NavButton>
        <NavButton width={12} aria-label="Последние расположения"><Chevron dir="down" /></NavButton>
        <NavButton width={27} aria-label="Вверх"><UpIcon /></NavButton>
        <AddressBox>
          <AddressIcon><FolderIcon /></AddressIcon>
          <Crumbs>
            {crumbs.map(name => (
              <Crumb key={name}>
                <CrumbArrow><Chevron /></CrumbArrow>
                <a href="#path">{name}</a>
              </Crumb>
            ))}
          </Crumbs>
          <BoxButton aria-label="Предыдущие расположения"><Chevron dir="down" size={9} /></BoxButton>
          <BoxButton framed aria-label="Обновить"><RefreshIcon /></BoxButton>
        </AddressBox>
        <SearchBox>
          <input type="text" placeholder="Поиск: AXESASRP_veh_lfa" aria-label="Поиск" />
          <LoupeIcon />
        </SearchBox>
      </AddressRow>

      <Body>
        <Sidebar>
          {tree.map(items => (
            <TreeList key={items[0].title}>
              {items.map(({ title, icon, nested, selected }) => (
                <TreeItem key={title} nested={nested ? 1 : undefined} selected={selected}>
                  <a href="#folder">{icon}{title}</a>
                </TreeItem>
              ))}
            </TreeList>
          ))}
        </Sidebar>
        <FileArea>
          <FileTable>
            <colgroup>
              <col width="261" />
              <col width="120" />
              <col width="120" />
              <col width="80" />
            </colgroup>
            <thead>
              <tr>
                <th>
                  Имя
                  <SortMark><Chevron dir="up" size={8} stroke={1} /></SortMark>
                </th>
                <th>Дата изменения</th>
                <th>Тип</th>
                <th>Размер</th>
              </tr>
            </thead>
            <tbody>
              <tr>
                <td><FileName><FileIcon />dlc.rpf</FileName></td>
                <td>26.04.2022 16:19</td>
                <td>Файл "RPF"</td>
                <SizeCell>12 089 КБ</SizeCell>
              </tr>
            </tbody>
          </FileTable>
        </FileArea>
      </Body>

      <StatusBar>
        1 элемент
        <StatusDivider />
        <ViewButtons>
          <ViewButton active aria-label="Таблица"><DetailsIcon /></ViewButton>
          <ViewButton aria-label="Крупные значки"><PictureIcon size={14} /></ViewButton>
        </ViewButtons>
      </StatusBar>

      <Taskbar>
        <TaskButtons>
          <TaskButton aria-label="Пуск"><StartIcon /></TaskButton>
          <TaskButton aria-label="Поиск"><LoupeIcon size={16} color="#fff" stroke={1} /></TaskButton>
          <TaskButton aria-label="Представление задач"><TaskViewIcon /></TaskButton>
        </TaskButtons>
        <AppButtons>
          {apps.map(({ title, icon, active, running }) => (
            <TaskButton key={title} aria-label={title} active={active} running={running}>{icon}</TaskButton>
          ))}
        </AppButtons>
        <Tray>
          <TrayButton aria-label="Скрытые значки"><Chevron dir="up" size={14} color="#fff" stroke={0.7} /></TrayButton>
          <TrayButton aria-label="Сеть"><TrayNetworkIcon /></TrayButton>
          <TrayButton aria-label="Обновления"><TrayUpdateIcon /></TrayButton>
          <TrayButton aria-label="Громкость"><VolumeIcon /></TrayButton>
          <TrayButton width={36}>РУС</TrayButton>
          <TrayButton width={66} small>
            <Clock>
              <span>15:36</span>
              <span>06.03.2024</span>
            </Clock>
          </TrayButton>
          <TrayButton width={40} aria-label="Уведомления"><ActionCenterIcon /></TrayButton>
          <ShowDesktop aria-label="Показать рабочий стол" />
        </Tray>
      </Taskbar>

      <Watermark>
        <span>ragemp</span>
        <span>.pro</span>
      </Watermark>
    </Desktop>
  </>
);

export default App;
